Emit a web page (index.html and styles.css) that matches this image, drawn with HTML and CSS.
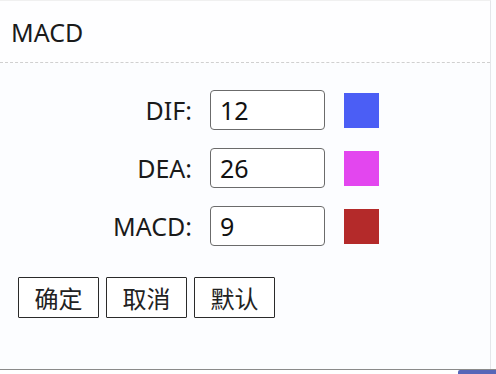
FILE: index.html
```html
<!DOCTYPE html>
<html lang="zh">
<head>
<meta charset="utf-8">
<link rel="stylesheet" href="styles.css">
</head>
<body>
<div class="page">
  <div class="panel">
    <div class="header">MACD</div>
    <div class="form">
      <label class="lbl">DIF:</label>
      <input class="num" type="text" value="12">
      <span class="swatch dif"></span>
      <label class="lbl">DEA:</label>
      <input class="num" type="text" value="26">
      <span class="swatch dea"></span>
      <label class="lbl">MACD:</label>
      <input class="num" type="text" value="9">
      <span class="swatch macd"></span>
    </div>
    <div class="actions">
      <button class="btn">确定</button>
      <button class="btn">取消</button>
      <button class="btn">默认</button>
    </div>
  </div>
  <div class="footer"><span class="thumb"></span></div>
</div>
</body>
</html>
```

FILE: styles.css
```css
html, body {
  margin: 0;
  padding: 0;
  background: #fcfdff;
}
body {
  font-family: "Noto Sans", "Noto Sans CJK SC", sans-serif;
  color: #1a1a1a;
}
.page {
  width: 496px;
  height: 374px;
  display: flex;
  flex-direction: column;
  overflow: hidden;
}
.panel {
  width: 491px;
  height: 370px;
  box-sizing: border-box;
  border-right: 1px solid #e4e6ea;
  border-top: 1px solid #f0f0f0;
  display: flex;
  flex-direction: column;
}
.header {
  height: 62px;
  box-sizing: border-box;
  border-bottom: 1px dashed #d0d0d0;
  padding-left: 11px;
  display: flex;
  align-items: center;
  font-size: 25px;
  background: #fefeff;
}
.form {
  margin-top: 27px;
  display: grid;
  grid-template-columns: 192px 115px 35px;
  column-gap: 18px;
  row-gap: 18px;
  align-items: center;
}
.lbl {
  text-align: right;
  font-size: 25px;
}
.num {
  width: 115px;
  height: 40px;
  box-sizing: border-box;
  border: 1px solid #6b6b6b;
  border-radius: 4px;
  padding: 0 0 0 9px;
  font-family: "Noto Sans", sans-serif;
  font-size: 25px;
  color: #111;
  background: #fff;
  margin: 0;
}
.swatch {
  width: 35px;
  height: 35px;
  margin-left: 1px;
}
.dif { background: #4b5ef5; }
.dea { background: #e346ef; }
.macd { background: #b42a2a; }
.actions {
  margin-top: 31px;
  padding-left: 18px;
  display: flex;
  gap: 7px;
}
.btn {
  width: 81px;
  height: 41px;
  box-sizing: border-box;
  border: 1px solid #2a2a2a;
  border-radius: 1px;
  background: #fff;
  font-family: "Noto Sans CJK SC", sans-serif;
  font-size: 24px;
  color: #222;
  padding: 0;
  margin: 0;
}
.footer {
  height: 4px;
  border-top: 1px solid #8a8a8a;
  position: relative;
  background: #fff;
}
.thumb {
  position: absolute;
  right: 0;
  top: 0;
  width: 38px;
  height: 4px;
  background: #5666b8;
  border-radius: 2px 0 0 0;
}
```
